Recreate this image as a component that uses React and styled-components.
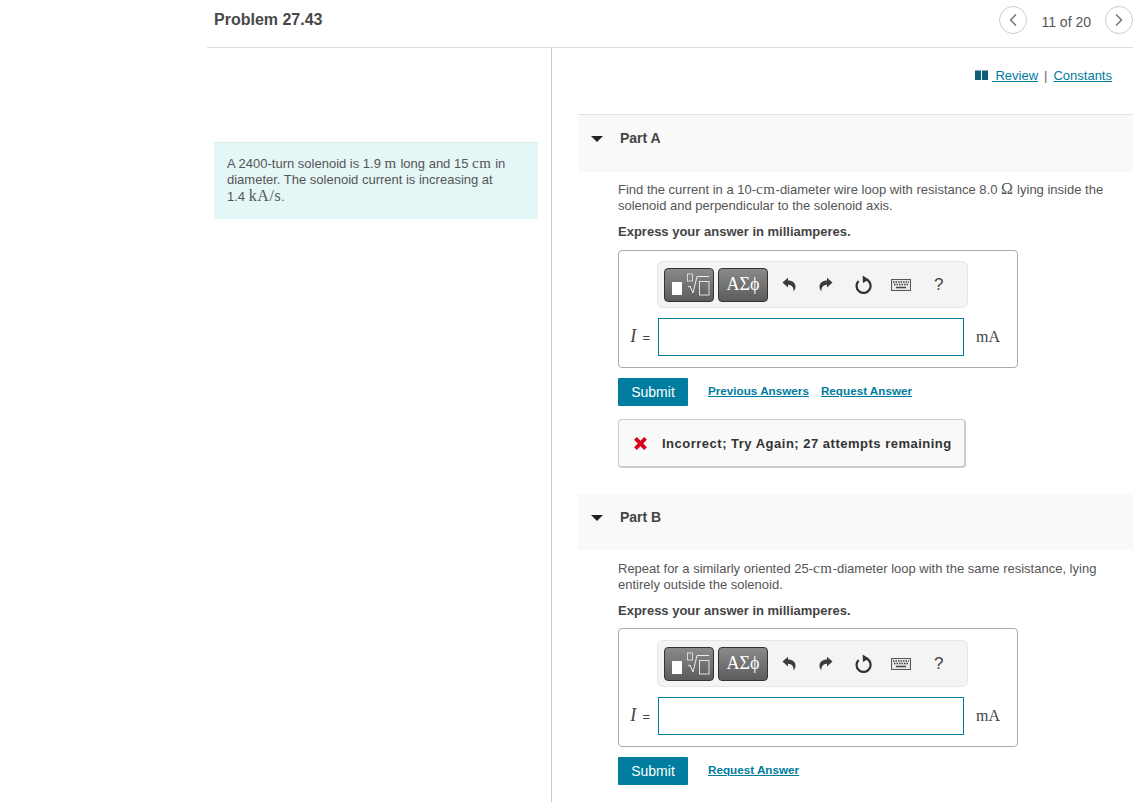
import React from 'react';
import styled, { createGlobalStyle } from 'styled-components';
import { ChevronLeft, ChevronRight } from 'lucide-react';

const GlobalStyle = createGlobalStyle`
  html, body {
    margin: 0;
    padding: 0;
    background: #fff;
  }
  body {
    font-family: "Liberation Sans", Arial, sans-serif;
    color: #444;
  }
`;

const Page = styled.div`
  width: 1133px;
  height: 802px;
  overflow: hidden;
  box-sizing: border-box;
  padding-left: 207px;
`;

const Header = styled.header`
  height: 48px;
  box-sizing: border-box;
  border-bottom: 1px solid #ddd;
  display: flex;
  align-items: flex-start;
  justify-content: space-between;
  padding: 6px 0 0 7px;
`;

const Title = styled.h1`
  margin: 1px 0 0;
  font-size: 16px;
  line-height: 26px;
  font-weight: 700;
  color: #484848;
`;

const Pager = styled.div`
  display: flex;
  align-items: flex-start;
  font-size: 14px;
  color: #555;
`;

const PagerLabel = styled.span`
  margin: 2px 14px 0;
  line-height: 28px;
`;

const RoundButton = styled.span`
  width: 28px;
  height: 28px;
  box-sizing: border-box;
  border: 1px solid #ccc;
  border-radius: 50%;
  display: flex;
  align-items: center;
  justify-content: center;
  color: #777;
  background: #fff;
`;

const Columns = styled.div`
  display: flex;
  height: 754px;
`;

const LeftColumn = styled.aside`
  width: 345px;
  box-sizing: border-box;
  border-right: 1px solid #ccc;
  padding: 94px 13px 0 7px;
`;

const Intro = styled.div`
  background: #e5f6f7;
  border-top: 1px solid #dde9ea;
  height: 77px;
  box-sizing: border-box;
  padding: 13px 20px 12px 13px;
  font-size: 13px;
  line-height: 16px;
  color: #555;
`;

const NoWrap = styled.span`
  white-space: nowrap;
`;

const RightColumn = styled.main`
  flex: 1;
  padding-left: 26px;
`;

const LinksRow = styled.div`
  height: 66px;
  box-sizing: border-box;
  padding: 19px 21px 0 0;
  display: flex;
  justify-content: flex-end;
  align-items: flex-start;
  font-size: 13px;
  line-height: 17px;
  color: #666;
`;

const Link = styled.a`
  color: #007c9e;
  text-decoration: underline;
  font-size: ${(p) => p.$size || 13}px;
  font-weight: ${(p) => (p.$bold ? 700 : 400)};
`;

const BookIcon = styled.svg`
  width: 13px;
  height: 10px;
  margin: 3px 4px 0 0;
  fill: #0c5f78;
`;

const Separator = styled.span`
  margin: 0 6px;
`;

const PartHeader = styled.div`
  height: ${(p) => p.$height}px;
  box-sizing: border-box;
  background: #f9f9f9;
  border-top: ${(p) => (p.$ruled ? '1px solid #e2e2e2' : 'none')};
  display: flex;
  align-items: flex-start;
  padding-top: 14px;
  font-size: 14px;
  line-height: 18px;
  font-weight: 700;
  color: #444;
`;

const Arrow = styled.span`
  width: 0;
  height: 0;
  margin: 7px 0 0 13px;
  border-left: 6px solid transparent;
  border-right: 6px solid transparent;
  border-top: 6px solid #222;
`;

const PartName = styled.span`
  margin-left: 17px;
`;

const PartBody = styled.section`
  padding: ${(p) => p.$top}px 0 0 40px;
`;

const Question = styled.p`
  margin: 0;
  width: 500px;
  font-size: 13px;
  line-height: 16px;
  color: #555;
`;

const Instruction = styled.p`
  margin: 10px 0 ${(p) => p.$gap}px;
  font-size: 13px;
  line-height: 16px;
  font-weight: 700;
  color: #444;
`;

const Math = styled.span`
  font-family: "Liberation Serif", "DejaVu Serif", serif;
  font-size: ${(p) => p.$size || 15}px;
  letter-spacing: 0.6px;
  line-height: 1;
`;

const AnswerBox = styled.div`
  width: 400px;
  height: ${(p) => p.$height}px;
  box-sizing: border-box;
  border: 1px solid #aaa;
  border-radius: 4px;
  padding: ${(p) => p.$top}px 0 0 38px;
`;

const Toolbar = styled.div`
  width: 311px;
  height: 47px;
  box-sizing: border-box;
  background: #f4f4f4;
  border: 1px solid #e6e6e6;
  border-radius: 6px;
  display: flex;
  align-items: center;
  padding-left: 6px;
`;

const TemplateButton = styled.span`
  width: 50px;
  height: 34px;
  box-sizing: border-box;
  border: 1px solid #333;
  border-radius: 4px;
  background: linear-gradient(#8a8a8a, #5c5c5c);
  margin-right: 4px;
  display: flex;
  align-items: center;
  justify-content: center;
  color: #fff;
  font-family: "Liberation Serif", serif;
  font-size: 18px;
`;

const ToolIcons = styled.div`
  display: flex;
  align-items: center;
  margin-left: -2px;
`;

const ToolSlot = styled.span`
  width: 37.5px;
  display: flex;
  justify-content: center;
  align-items: center;
  color: #444;
  font-size: 17px;
`;

const InputRow = styled.div`
  display: flex;
  align-items: center;
  margin: 10px 0 0 -38px;
`;

const InputLabel = styled.span`
  width: 39px;
  box-sizing: border-box;
  padding-right: 8px;
  margin-bottom: 2px;
  text-align: right;
  font-size: 13px;
  color: #444;
  white-space: nowrap;
`;

const Variable = styled(Math)`
  font-style: italic;
  margin-right: 2px;
`;

const AnswerInput = styled.input`
  width: 306px;
  height: 38px;
  box-sizing: border-box;
  border: 1px solid #007c9e;
  border-radius: 0;
  outline: none;
  padding: 0 6px;
  background: #fff;
`;

const Unit = styled.span`
  margin-left: 12px;
  font-family: "Liberation Serif", serif;
  font-size: 16px;
  color: #444;
`;

const ActionRow = styled.div`
  display: flex;
  align-items: center;
  margin-top: 10px;
`;

const SubmitButton = styled.button`
  width: 70px;
  height: 28px;
  border: none;
  border-radius: 1px;
  background: #007c9e;
  color: #fff;
  font-family: inherit;
  font-size: 14px;
  padding: 0;
  margin-right: 20px;
`;

const ActionLink = styled(Link)`
  margin: 0 12px 3px 0;
`;

const Feedback = styled.div`
  width: 348px;
  height: 49px;
  box-sizing: border-box;
  margin-top: 13px;
  padding: 1px 0 0 14px;
  background: #f9f9f9;
  border: 1px solid #ccc;
  border-bottom-width: 2px;
  border-right-width: 2px;
  border-radius: 4px;
  display: flex;
  align-items: center;
  font-size: 13px;
  font-weight: 700;
  letter-spacing: 0.5px;
  color: #333;
`;

const CrossIcon = styled.svg`
  width: 15px;
  height: 15px;
  margin-right: 14px;
`;

const FollowingPart = styled.div`
  margin-top: 26px;
`;

const UndoIcon = ({ flip }) => (
  <svg width="14" height="15" viewBox="0 0 14 15" style={flip ? { transform: 'scaleX(-1)' } : undefined}>
    <path d="M0.5 5.5 L6 0.8 V3.6 C10.5 3.6 13.5 6.2 13.5 9.6 C13.5 11.6 12.8 13 11.6 14.4 C11.8 11 10.2 7.8 6 7.8 V10.4 Z" fill="#3c3c3c" />
  </svg>
);

const ResetIcon = () => (
  <svg width="17" height="19" viewBox="0 0 17 19">
    <path d="M11.500 4.600 A7 7 0 1 1 3.600 6" fill="none" stroke="#333" strokeWidth="2.200" />
    <path d="M7.600 0.400 L14 4.400 L8 8 Z" fill="#333" />
  </svg>
);

const KeyboardIcon = () => (
  <svg width="20" height="12" viewBox="0 0 20 12">
    <rect x="0.5" y="0.5" width="19" height="11" fill="#e8e8e8" stroke="#555" />
    <path d="M2 3h1.500M4.500 3h1.500M7 3h1.500M9.500 3h1.500M12 3h1.500M14.500 3h1.500M17 3h1M3 5.500h1.500M5.500 5.500h1.500M8 5.500h1.500M10.500 5.500h1.500M13 5.500h1.500M15.500 5.500h1.500M5 8.500h10" stroke="#444" strokeWidth="1.400" fill="none" />
  </svg>
);

const RootTemplateIcon = () => (
  <svg width="42" height="28" viewBox="0 0 42 28">
    <rect x="4" y="11" width="10" height="13" fill="#fff" />
    <rect x="19.500" y="3" width="5" height="7" fill="none" stroke="#eee" strokeWidth="0.8" />
    <path d="M20 16 L22 15 L25 22 L29 5.500 H41" fill="none" stroke="#eee" strokeWidth="1" />
    <rect x="31.500" y="10.500" width="9.500" height="13.500" fill="none" stroke="#eee" strokeWidth="0.9" />
  </svg>
);

const MathToolbar = () => (
  <Toolbar>
    <TemplateButton><RootTemplateIcon /></TemplateButton>
    <TemplateButton>ΑΣϕ</TemplateButton>
    <ToolIcons>
      <ToolSlot><UndoIcon /></ToolSlot>
      <ToolSlot><UndoIcon flip /></ToolSlot>
      <ToolSlot><ResetIcon /></ToolSlot>
      <ToolSlot><KeyboardIcon /></ToolSlot>
      <ToolSlot>?</ToolSlot>
    </ToolIcons>
  </Toolbar>
);

const AnswerForm = ({ height, top }) => (
  <AnswerBox $height={height} $top={top}>
    <MathToolbar />
    <InputRow>
      <InputLabel><Variable $size={18}>I</Variable> =</InputLabel>
      <AnswerInput />
      <Unit>mA</Unit>
    </InputRow>
  </AnswerBox>
);

const App = () => (
  <Page>
    <GlobalStyle />
    <Header>
      <Title>Problem 27.43</Title>
      <Pager>
        <RoundButton><ChevronLeft size={20} strokeWidth={2} /></RoundButton>
        <PagerLabel>11 of 20</PagerLabel>
        <RoundButton><ChevronRight size={20} strokeWidth={2} /></RoundButton>
      </Pager>
    </Header>
    <Columns>
      <LeftColumn>
        <Intro>
          A 2400-turn solenoid is 1.9 <Math>m</Math> long and 15 <Math>cm</Math> in diameter. The solenoid current is increasing at <NoWrap>1.4 <Math $size={16}>kA/s</Math>.</NoWrap>
        </Intro>
      </LeftColumn>
      <RightColumn>
        <LinksRow>
          <BookIcon viewBox="0 0 13 10">
            <path d="M0 0.5 H5.500 L6 1 V10 H0 Z M7 1 L7.500 0.5 H13 V10 H7 Z" />
          </BookIcon>
          <Link>&nbsp;Review</Link>
          <Separator>|</Separator>
          <Link>Constants</Link>
        </LinksRow>

        <PartHeader $height={58} $ruled>
          <Arrow />
          <PartName>Part A</PartName>
        </PartHeader>
        <PartBody $top={9}>
          <Question>
            Find the current in a 10-<Math>cm</Math>-diameter wire loop with resistance 8.0 <Math $size={16}>Ω</Math> lying inside the solenoid and perpendicular to the solenoid axis.
          </Question>
          <Instruction $gap={10}>Express your answer in milliamperes.</Instruction>
          <AnswerForm height={118} top={10} />
          <ActionRow>
            <SubmitButton>Submit</SubmitButton>
            <ActionLink $size={11.7} $bold>Previous Answers</ActionLink>
            <ActionLink $size={11.7} $bold>Request Answer</ActionLink>
          </ActionRow>
          <Feedback>
            <CrossIcon viewBox="0 0 14 14">
              <path d="M1 3.500 L3.500 1 L7 4.500 L10.500 1 L13 3.500 L9.500 7 L13 10.500 L10.500 13 L7 9.500 L3.500 13 L1 10.500 L4.500 7 Z" fill="#d9001b" />
            </CrossIcon>
            Incorrect; Try Again; 27 attempts remaining
          </Feedback>
        </PartBody>

        <FollowingPart>
          <PartHeader $height={56}>
            <Arrow />
            <PartName>Part B</PartName>
          </PartHeader>
          <PartBody $top={11}>
            <Question>
              Repeat for a similarly oriented 25-<Math>cm</Math>-diameter loop with the same resistance, lying entirely outside the solenoid.
            </Question>
            <Instruction $gap={9}>Express your answer in milliamperes.</Instruction>
            <AnswerForm height={119} top={11} />
            <ActionRow>
              <SubmitButton>Submit</SubmitButton>
              <ActionLink $size={11.7} $bold>Request Answer</ActionLink>
            </ActionRow>
          </PartBody>
        </FollowingPart>
      </RightColumn>
    </Columns>
  </Page>
);

export default App;
